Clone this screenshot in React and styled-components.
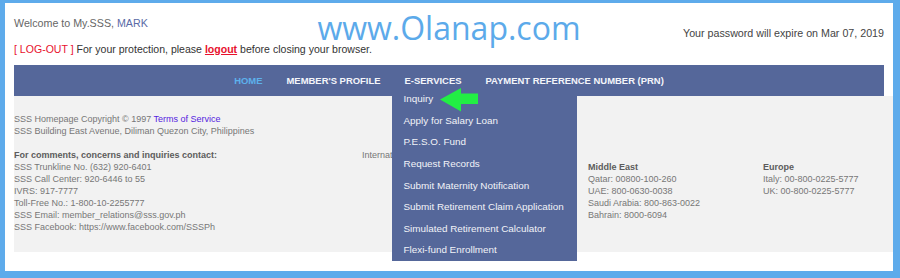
import React from "react";
import styled, { createGlobalStyle } from "styled-components";

const Global = createGlobalStyle`
  html, body { margin: 0; padding: 0; background: #ffffff; }
  body { font-family: "Liberation Sans", Arial, sans-serif; }
  * { box-sizing: border-box; }
`;

const Frame = styled.div`
  position: relative;
  width: 900px;
  height: 278px;
  border-style: solid;
  border-color: #5eabeb;
  border-width: 3px 7px 7px 5px;
  background: #ffffff;
  padding: 0 9px;
  overflow: hidden;
  color: #666;
`;

const Watermark = styled.div`
  position: absolute;
  top: 13px;
  left: 50%;
  transform: translateX(-50%);
  font-family: "Open Sans", "Lato", sans-serif;
  font-size: 32px;
  font-weight: 400;
  color: #5caaea;
  white-space: nowrap;
  line-height: 24px;
  pointer-events: none;
`;

const TopRow = styled.div`
  display: flex;
  justify-content: space-between;
  align-items: flex-start;
  padding-top: 14px;
`;

const Welcome = styled.div`
  font-size: 10.7px;
  line-height: 12px;
  color: #666;
`;

const UserName = styled.span`
  color: #5a6aa6;
`;

const Expiry = styled.div`
  margin-top: 10px;
  font-size: 10.7px;
  line-height: 13px;
  color: #444;
`;

const LogoutLine = styled.div`
  margin-top: 3px;
  font-size: 10.55px;
  line-height: 13px;
  color: #333;
`;

const Red = styled.span`
  color: #e8112d;
`;

const RedLink = styled.a`
  color: #e8112d;
  text-decoration: underline;
  font-weight: bold;
`;

const NavBar = styled.nav`
  margin-top: 9px;
  height: 31px;
  background: #55679a;
  display: flex;
  justify-content: center;
  align-items: stretch;
  position: relative;
  z-index: 2;
`;

const NavItem = styled.div`
  position: relative;
  display: flex;
  align-items: center;
  padding: 0 12px;
  font-size: 9.45px;
  font-weight: bold;
  color: ${(p) => (p.$active ? "#5db1ec" : "#f4f5fa")};
  white-space: nowrap;
`;

const Dropdown = styled.div`
  position: absolute;
  top: 23px;
  left: -1px;
  width: 185px;
  background: #55679a;
  display: flex;
  flex-direction: column;
`;

const DropItem = styled.div`
  height: 21.6px;
  display: flex;
  align-items: center;
  padding-left: 12px;
  font-size: 9.9px;
  font-weight: normal;
  color: #f2f3f8;
`;

const Arrow = styled.svg`
  position: absolute;
  top: 0;
  left: 48px;
`;

const FooterPanel = styled.div`
  margin-right: -9px;
  background: #f2f2f2;
  height: 156px;
  padding: 17px 0 0 0;
  font-size: 9px;
  line-height: 12px;
  color: #777;
`;

const Line = styled.div``;

const Link = styled.a`
  color: #5522e0;
  text-decoration: none;
`;

const ContactGrid = styled.div`
  margin-top: 12px;
  display: grid;
  grid-template-columns: 348px 1fr;
`;

const Heading = styled.div`
  font-weight: bold;
  color: #5c5c5c;
`;

const Regions = styled.div`
  display: grid;
  grid-template-columns: 226px 175px 1fr;
`;

const Region = styled.div``;

const services = [
  "Inquiry",
  "Apply for Salary Loan",
  "P.E.S.O. Fund",
  "Request Records",
  "Submit Maternity Notification",
  "Submit Retirement Claim Application",
  "Simulated Retirement Calculator",
  "Flexi-fund Enrollment",
];

export default function App() {
  return (
    <>
      <Global />
      <Frame>
        <TopRow>
          <Welcome>
            Welcome to My.SSS, <UserName>MARK</UserName>
          </Welcome>
          <Expiry>Your password will expire on Mar 07, 2019</Expiry>
        </TopRow>
        <LogoutLine>
          <Red>[ LOG-OUT ]</Red> For your protection, please{" "}
          <RedLink>logout</RedLink> before closing your browser.
        </LogoutLine>
        <NavBar>
          <NavItem $active>HOME</NavItem>
          <NavItem>MEMBER'S PROFILE</NavItem>
          <NavItem>
            E-SERVICES
            <Dropdown>
              {services.map((s) => (
                <DropItem key={s}>{s}</DropItem>
              ))}
              <Arrow width="40" height="25" viewBox="0 0 40 25">
                <polygon
                  points="0,11.5 21,0 21,5.5 38,5.5 38,16 21,16 21,23.5"
                  fill="#22ee44"
                />
              </Arrow>
            </Dropdown>
          </NavItem>
          <NavItem>PAYMENT REFERENCE NUMBER (PRN)</NavItem>
        </NavBar>
        <FooterPanel>
          <Line>
            SSS Homepage Copyright © 1997 <Link>Terms of Service</Link>
          </Line>
          <Line>SSS Building East Avenue, Diliman Quezon City, Philippines</Line>
          <ContactGrid>
            <div>
              <Heading>For comments, concerns and inquiries contact:</Heading>
              <Line>SSS Trunkline No. (632) 920-6401</Line>
              <Line>SSS Call Center: 920-6446 to 55</Line>
              <Line>IVRS: 917-7777</Line>
              <Line>Toll-Free No.: 1-800-10-2255777</Line>
              <Line>SSS Email: member_relations@sss.gov.ph</Line>
              <Line>SSS Facebook: https://www.facebook.com/SSSPh</Line>
            </div>
            <div>
              <Line>International Toll-Free Numbers:</Line>
              <Regions>
                <Region />
                <Region>
                  <Heading>Middle East</Heading>
                  <Line>Qatar: 00800-100-260</Line>
                  <Line>UAE: 800-0630-0038</Line>
                  <Line>Saudi Arabia: 800-863-0022</Line>
                  <Line>Bahrain: 8000-6094</Line>
                </Region>
                <Region>
                  <Heading>Europe</Heading>
                  <Line>Italy: 00-800-0225-5777</Line>
                  <Line>UK: 00-800-0225-5777</Line>
                </Region>
              </Regions>
            </div>
          </ContactGrid>
        </FooterPanel>
        <Watermark>www.Olanap.com</Watermark>
      </Frame>
    </>
  );
}
